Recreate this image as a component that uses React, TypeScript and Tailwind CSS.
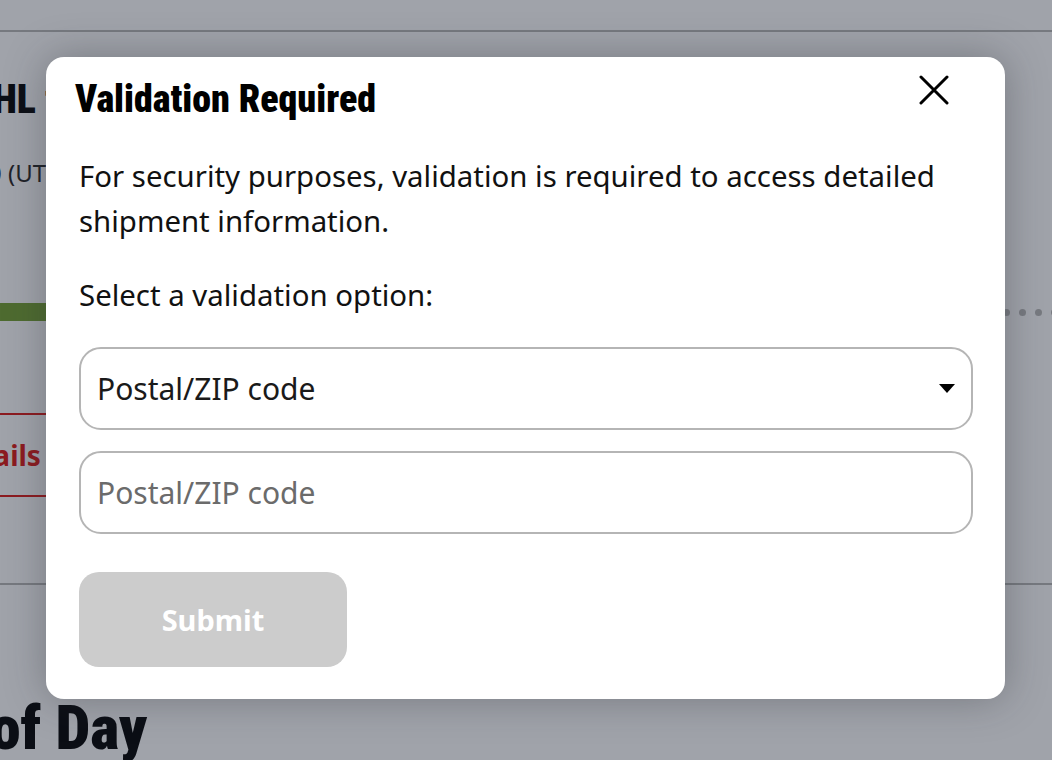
const body = "font-['Noto_Sans',sans-serif]";
const heavy = "font-['Roboto_Condensed','Liberation_Sans_Narrow','Roboto',sans-serif]";

const BackgroundPage = () => (
  <div className={`min-h-[760px] w-full overflow-hidden bg-[#a0a3aa] ${body}`}>
    <div className="h-[32px] border-b-2 border-[#76797f]" />
    <div className={`mt-[48px] -ml-[30px] whitespace-nowrap text-[40px] leading-[40px] font-black text-[#0b0e15] ${heavy}`}>
      DHL for Business
    </div>
    <div className="mt-[38px] -ml-[12px] whitespace-nowrap text-[24px] leading-[30px] text-[#1f2228]">
      0 (UTC+1)
    </div>
    <div className="mt-[115px] flex items-center">
      <div className="h-[18px] w-[60px] bg-[#4e6b30]" />
      <div className="flex-1" />
      <div className="-mr-[6px] flex gap-[9px]">
        {Array.from({ length: 4 }).map((_, i) => (
          <span key={i} className="h-[7px] w-[7px] rounded-full bg-[#777a80]" />
        ))}
      </div>
    </div>
    <div className="mt-[92px] -ml-[60px] w-[160px] border-y-2 border-[#8c1b20] py-[22px] pl-[4px] text-[28px] leading-[36px] font-bold text-[#8c1b20]">
      Details
    </div>
    <div className="mt-[86px] border-b-2 border-[#76797f]" />
    <div className={`mt-[112px] -ml-[10px] whitespace-nowrap text-[62px] leading-[62px] font-black text-[#0b0e15] ${heavy}`}>
      of Day
    </div>
  </div>
);

const ValidationModal = () => (
  <div className="absolute left-[46px] top-[57px] w-[959px] rounded-[18px] bg-white pb-[32px] pl-[29px] pr-[32px] pt-[20px] shadow-[0_0_40px_rgba(40,42,50,0.35)]">
    <div className="flex items-start justify-between">
      <h2 className={`text-[38px] leading-[44px] font-black text-black ${heavy}`}>Validation Required</h2>
      <button className="mr-[24px] -mt-[2px] text-black">
        <svg width="30" height="30" viewBox="0 0 30 30">
          <path d="M2 2L28 28M28 2L2 28" stroke="#000" strokeWidth="3" strokeLinecap="round" />
        </svg>
      </button>
    </div>
    <div className={`pl-[4px] ${body}`}>
      <p className="mt-[33px] text-[29.4px] leading-[45px] text-[#111]">
        For security purposes, validation is required to access detailed shipment information.
      </p>
      <p className="mt-[29px] text-[29.4px] leading-[45px] text-[#111]">Select a validation option:</p>
      <div className="mt-[29px] flex h-[83px] items-center justify-between rounded-[22px] border-2 border-[#b5b5b5] pl-[16px] pr-[16px]">
        <span className="text-[30px] text-[#1a1a1a]">Postal/ZIP code</span>
        <svg width="16" height="10" viewBox="0 0 16 10">
          <path d="M0 0H16L8 9Z" fill="#000" />
        </svg>
      </div>
      <div className="mt-[21px] flex h-[83px] items-center rounded-[22px] border-2 border-[#b5b5b5] pl-[16px]">
        <span className="text-[30px] text-[#6b6b6b]">Postal/ZIP code</span>
      </div>
      <button className="mt-[38px] flex h-[95px] w-[268px] items-center justify-center rounded-[20px] bg-[#cccccc] text-[29px] font-bold text-white">
        Submit
      </button>
    </div>
  </div>
);

export default function App() {
  return (
    <div className="relative h-[760px] w-[1052px] overflow-hidden">
      <BackgroundPage />
      <ValidationModal />
    </div>
  );
}
